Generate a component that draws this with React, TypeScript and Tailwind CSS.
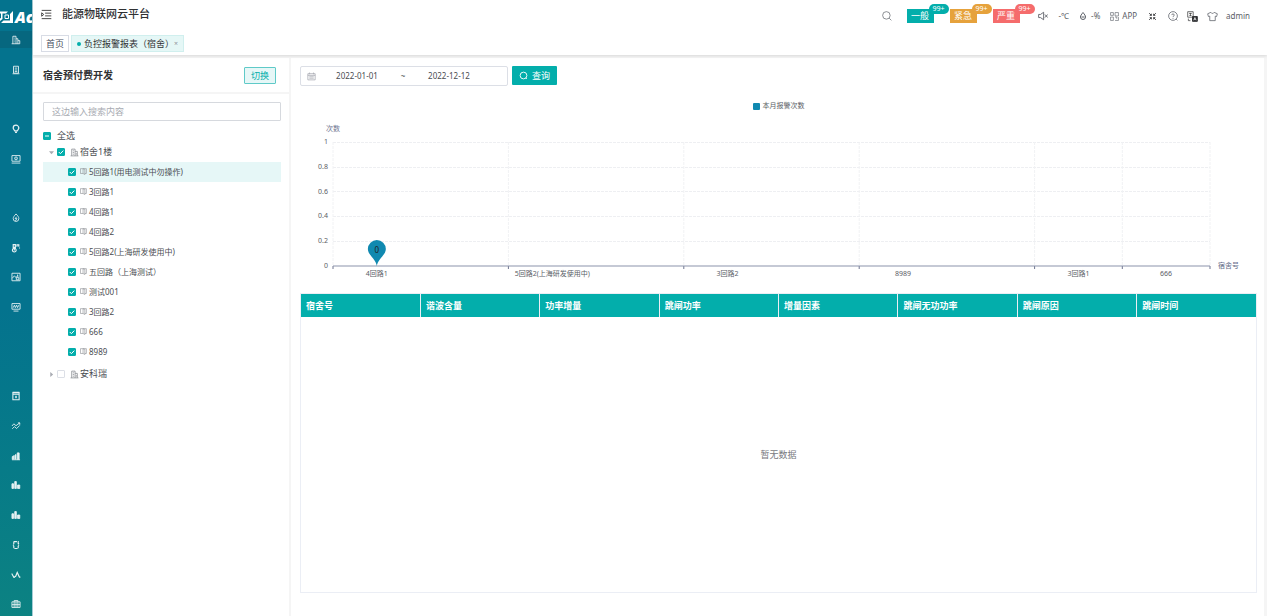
import { useState } from 'react';
import type { ReactNode } from 'react';

const sideIcons: Array<ReactNode | null> = [
  // buildings
  <path d="M3 14V2h5v12M8 6h3v8M11 9h3v5H1M5 5h1M5 8h1M5 11h1" />,
  // meter
  <path d="M4 2h8v11H4zM2.500 14h11M6 5h4M6 8h4M6 10.500h4" />,
  null,
  <path d="M6 11C5.500 9.500 3.500 8.500 3.500 6.500a4.500 4.500 0 0 1 9 0C12.500 8.500 10.500 9.500 10 11zM6.500 13.500h3" strokeWidth="2" />,
  <path d="M1.500 2.500h13v9h-13zM1 14.500h14M8 4.700a2.300 2.300 0 1 1 0 4.600A2.300 2.300 0 0 1 8 4.700zM8 6.500v1" />,
  null,
  <path d="M8 1.500c3 3 4.500 5 4.500 7.500a4.500 4.500 0 0 1-9 0C3.500 7 5 4.500 8 1.500zM9 6L6.500 9h3L7 12.500" />,
  <path d="M3.500 2.500v6.500a3 3 0 1 0 3.500 0v-6.500zM5.300 6v6M9.500 6V3h3v3M13 8h1.500" strokeWidth="1.800" />,
  <path d="M1.500 2h13v12h-13zM2 10l3.500-4 2.500 3 2-2.500h2M8.500 9h4v3.500h-4zM10.500 4v3" />,
  <path d="M1.500 2.500h13v9h-13zM4 14.500h8M3.500 9l2-4 1.500 4 2-4 1.500 4 2-4" />,
  null,
  null,
  <path d="M3 2.500h10v11.500H3zM2.500 2h11M3 5h10M8 7.500v4M6.500 9.500h3" strokeWidth="1.700" />,
  <path d="M1.500 8l3-3.500 3.500 3L14 3M2 12.500l3.500-3.500 3.500 3L14 7M11 3h3v3" />,
  <path fill="currentColor" d="M2 13.500V9l2-1.500v6M6 13.500V7l2-1.500v8M10 13.500V3h3v10.500zM1.500 14h13" />,
  <path fill="currentColor" d="M1.500 13.500V6h2.500v7.500zM6 13.500v-11h2.500v11zM10.500 13.500V8H14v5.500z" />,
  <path fill="currentColor" d="M1.500 13.500V6h2.500v7.500zM6 13.500v-11h2.500v11zM10.500 13.500V8H14v5.500z" />,
  <path d="M4.500 2.500h7v3l1.500 0M11.500 2.500v3.500l1.500 2-1.500 2v3.500h-7V10L3 8l1.500-2V2.500" strokeDasharray="5 1.500" strokeWidth="1.800" />,
  <path d="M1.500 6.500l3 5 3-1.500 2.500-6 3.500 7.500M1 6h1M4 12h2M9 4h1.500M13 11.500h2" strokeWidth="1.900" />,
  <path d="M1.500 4.500h13v9h-13zM5 4.500V2.500h6v2M1.500 9h13M5 4.500v9M8 4.500v9M11 4.500v9" />,
];

interface Leaf {
  id: number;
  name: string;
}

const leaves: Leaf[] = [
  { id: 1, name: '5回路1(用电测试中勿操作)' },
  { id: 2, name: '3回路1' },
  { id: 3, name: '4回路1' },
  { id: 4, name: '4回路2' },
  { id: 5, name: '5回路2(上海研发使用中)' },
  { id: 6, name: '五回路（上海测试）' },
  { id: 7, name: '测试001' },
  { id: 8, name: '3回路2' },
  { id: 9, name: '666' },
  { id: 10, name: '8989' },
];

const alarms = [
  { name: '一般', color: 'bg-[#03aeab]' },
  { name: '紧急', color: 'bg-[#e6a23c]' },
  { name: '严重', color: 'bg-[#f56c6c]' },
];

const columns = ['宿舍号', '谐波含量', '功率增量', '跳闸功率', '增量因素', '跳闸无功功率', '跳闸原因', '跳闸时间'];

const yTicks = ['1', '0.8', '0.6', '0.4', '0.2', '0'];

// start and end of every category band, out of 10
const bands = [
  { from: 0, to: 2, label: '4回路1' },
  { from: 2, to: 4, label: '5回路2(上海研发使用中)' },
  { from: 4, to: 6, label: '3回路2' },
  { from: 6, to: 8, label: '8989' },
  { from: 8, to: 9, label: '3回路1' },
  { from: 9, to: 10, label: '666' },
];

function Icon({ children, className = '' }: { children: ReactNode; className?: string }) {
  return (
    <svg
      viewBox="0 0 16 16"
      fill="none"
      stroke="currentColor"
      strokeWidth="1.4"
      aria-hidden="true"
      className={`shrink-0 ${className}`}
    >
      {children}
    </svg>
  );
}

function Tick({ label, checked, partial, onChange }: {
  label: string;
  checked: boolean;
  partial?: boolean;
  onChange: () => void;
}) {
  return (
    <span className="relative flex size-2 shrink-0">
      <input
        type="checkbox"
        aria-label={label}
        checked={checked}
        onChange={onChange}
        className="size-2 appearance-none rounded-[1px] border border-[#dcdfe6] bg-white checked:border-[#03aeab] checked:bg-[#03aeab]"
      />
      {checked && (
        <svg viewBox="0 0 8 8" fill="none" stroke="white" aria-hidden="true" className="pointer-events-none absolute inset-0">
          <path d={partial ? 'M2 4h4' : 'M1.8 4l1.600 1.700L6.300 2.600'} />
        </svg>
      )}
    </span>
  );
}

function Sidebar() {
  return (
    <nav className="flex w-[33px] shrink-0 flex-col overflow-hidden border-r border-[#a5ccd5] bg-linear-to-b from-[#04738e] from-50% to-[#0c8282] text-white">
      <a href="#home" className="flex h-[25px] shrink-0 items-end gap-[2px] overflow-hidden">
        <svg viewBox="0 0 13 14" aria-hidden="true" className="mb-px h-[14px] w-[13px] shrink-0">
          <path d="M13 1v12H1l2.500-2.500H10V4z" fill="white" />
          <path d="M0 1.500h8L6 3.500H2.500V9L0 11V8.500L1 8V3.500H0z" fill="white" />
          <path d="M5 5h3.500v3.500H5z" fill="none" stroke="white" />
        </svg>
        <span className="font-['Open_Sans',sans-serif] text-[16px] leading-4 font-extrabold italic">Ac</span>
      </a>
      <ul className="-mb-[3px] flex flex-1 flex-col">
        {sideIcons.map((icon, i) => (
          <li key={i} className="flex flex-1 items-center">
            {icon && (
              <a
                href={`#menu-${i}`}
                className={`flex h-[17px] w-full items-center justify-center ${i === 0 ? 'bg-[#06677f]' : ''}`}
              >
                <Icon className="size-[10px] opacity-90">{icon}</Icon>
              </a>
            )}
          </li>
        ))}
      </ul>
    </nav>
  );
}

function Header() {
  return (
    <header className="relative h-[55px] shrink-0 bg-white shadow-[0_1px_3px_rgba(0,0,0,0.12)]">
      <div className="flex h-8 justify-between pr-[17px] pl-2">
        <div className="flex h-7 items-center gap-[10px]">
          <button aria-label="折叠菜单" className="flex">
            <Icon className="size-[11px] text-[#444]">
              <path d="M1 2h14M6 6h9M6 10h9M1 14h14M1 5.500v5L4 8z" />
            </Icon>
          </button>
          <h1 className="text-[11px] font-medium text-[#303133]">能源物联网云平台</h1>
        </div>
        <div className="flex items-center text-[8px] text-[#5a5e66]">
          <button aria-label="搜索" className="mr-[15px] flex">
            <Icon className="size-[10px]"><path strokeWidth="1.100" d="M7 1a6 6 0 1 1 0 12A6 6 0 0 1 7 1zM11.500 11.500L15 15" /></Icon>
          </button>
          <div className="mr-[18px] flex gap-4">
            {alarms.map(alarm => (
              <button key={alarm.name} className={`relative h-[14px] w-[27px] text-[9px] leading-[14px] text-white ${alarm.color}`}>
                {alarm.name}
                <span className={`absolute -top-[5px] left-[22px] h-[10px] rounded-full px-1 text-[7px] leading-[10px] ${alarm.color}`}>
                  99+
                </span>
              </button>
            ))}
          </div>
          <button aria-label="静音" className="mr-[11px] flex">
            <Icon className="size-[10px]"><path d="M1 5.500h3L9 2v12L4 10.500H1zM11 5.500l4.500 5M15.500 5.500l-4.500 5" /></Icon>
          </button>
          <span className="mr-[10px]">-℃</span>
          <Icon className="mr-1 size-[8px]"><path strokeWidth="2" d="M8 1c3 4 5 6 5 9a5 5 0 0 1-10 0c0-3 2-5 5-9zM5 10h6" /></Icon>
          <span className="mr-[10px]">-%</span>
          <a href="#app" className="mr-[11px] flex items-center gap-[3px]">
            <Icon className="size-[9px]"><path strokeWidth="1.100" d="M1 1h5v5H1zM9 1h6v6H9zM1 9h5v6H1zM9 9h3v3M15 9v6H9" /></Icon>
            APP
          </a>
          <button aria-label="全屏" className="mr-[11px] flex">
            <Icon className="size-[9px] text-[#303133]">
              <path strokeWidth="1.500" d="M3 6h3V3M10 3v3h3M13 10h-3v3M6 13v-3H3M2 2l4 4M14 2l-4 4M14 14l-4-4M2 14l4-4" />
            </Icon>
          </button>
          <button aria-label="帮助" className="mr-[9px] flex">
            <Icon className="size-[10px]"><path strokeWidth="1.200" d="M8 1a7 7 0 1 1 0 14A7 7 0 0 1 8 1zM6 6.500C6 4 10 4 10 6.500 10 8 8 8 8 9.500M8 11v1.500M13 13l2 2" /></Icon>
          </button>
          <button aria-label="语言" className="mr-[9px] flex">
            <Icon className="size-[11px] text-[#303133]">
              <path strokeWidth="1" d="M1 1h8v8H1zM3 3.500h4M5 3v4M3.500 6.500h3M2 11v3h3" />
              <path fill="currentColor" d="M8 8h7v7H8z" />
              <path stroke="white" strokeWidth="1" d="M9.800 13.500l1.700-4 1.700 4M10.500 12h2" />
            </Icon>
          </button>
          <button aria-label="主题" className="mr-[8px] flex">
            <Icon className="size-[11px]"><path strokeWidth="1.100" d="M5.500 2L1 4l1 4 2-.5V14h8V7.500l2 .5 1-4-4.500-2c-1 2-4 2-5 0z" /></Icon>
          </button>
          <a href="#user">admin</a>
        </div>
      </div>
      <div className="mt-[3px] flex gap-[2px] pl-2 text-[9px] leading-[15px]">
        <a href="#home" className="border border-[#d8dce5] px-1 text-[#495060]">首页</a>
        <span className="flex items-center border border-[#d0efee] bg-[#e5f7f6] px-[5px] text-[#303133]">
          <span className="mr-[3px] size-1 rounded-full bg-[#03aeab]" />
          <a href="#report">负控报警报表（宿舍）</a>
          <button aria-label="关闭" className="text-[7px] text-[#909399]">×</button>
        </span>
      </div>
    </header>
  );
}

function BuildingIcon() {
  return (
    <Icon className="mr-px ml-[5px] size-[9px] text-[#8a8d93]">
      <path d="M3 14V2h6v12M9 6h4v8M1 14h14M5 5h2M5 8h2M5 11h2M11 9v3" />
    </Icon>
  );
}

function TreePanel() {
  const [checked, setChecked] = useState<number[]>(leaves.map(l => l.id));
  const [otherChecked, setOtherChecked] = useState(false);
  const [current, setCurrent] = useState(1);
  const [keyword, setKeyword] = useState('');

  const toggle = (id: number) => {
    setChecked(checked.includes(id) ? checked.filter(c => c !== id) : [...checked, id]);
  };
  const toggleAll = () => setChecked(checked.length ? [] : leaves.map(l => l.id));

  return (
    <aside className="w-[256px] shrink-0 bg-white text-[9px] text-[#4a4d52]">
      <div className="flex h-9 items-center justify-between border-b-2 border-[#f5f5f5] pr-[13px] pl-[10px]">
        <h2 className="text-[10px] font-bold text-[#303133]">宿舍预付费开发</h2>
        <button className="h-[17px] rounded-[1px] border border-[#5fcac8] bg-[#e6f7f7] px-[6px] leading-[15px] text-[#03aeab]">切换</button>
      </div>
      <div className="pt-2 pr-2 pl-[10px]">
        <input
          type="text"
          aria-label="搜索"
          placeholder="这边输入搜索内容"
          value={keyword}
          onChange={e => setKeyword(e.target.value)}
          className="block h-[19px] w-full rounded-[1px] border border-[#d6d9de] px-2 outline-none placeholder:text-[#a8abb2]"
        />
        <div className="mt-[7px] flex h-4 items-center gap-[6px]">
          <Tick label="全选" partial checked={checked.length > 0} onChange={toggleAll} />
          全选
        </div>
        <ul>
          <li>
            <div className="flex h-4 items-center pl-[6px]">
              <svg viewBox="0 0 6 6" aria-hidden="true" className="mr-[3px] size-[5px]"><path d="M0 1.500h6L3 5z" fill="#a8abb2" /></svg>
              <Tick label="宿舍1楼" checked={checked.length > 0} onChange={toggleAll} />
              <BuildingIcon />
              宿舍1楼
            </div>
            <ul className="py-[2px] text-[8px]">
              {leaves.filter(l => l.name.includes(keyword)).map(leaf => (
                <li
                  key={leaf.id}
                  onClick={() => setCurrent(leaf.id)}
                  className={`flex h-5 items-center pl-[25px] ${leaf.id === current ? 'bg-[#e6f7f7]' : ''}`}
                >
                  <Tick label={leaf.name} checked={checked.includes(leaf.id)} onChange={() => toggle(leaf.id)} />
                  <Icon className="mr-[2px] mb-[2px] ml-1 size-[7px] text-[#8a8d93]"><path d="M1 1.500h6v11H1zM7 1.500h7.500v11H11M7 1.500l4 1.500v12l-4-2.500" /></Icon>
                  {leaf.name}
                </li>
              ))}
            </ul>
          </li>
          <li className="flex h-5 items-center pl-[6px]">
            <svg viewBox="0 0 6 6" aria-hidden="true" className="mr-[3px] size-[5px]"><path d="M1.500 0v6L5 3z" fill="#a8abb2" /></svg>
            <Tick label="安科瑞" checked={otherChecked} onChange={() => setOtherChecked(!otherChecked)} />
            <BuildingIcon />
            安科瑞
          </li>
        </ul>
      </div>
    </aside>
  );
}

function AlarmChart() {
  return (
    <figure className="text-[7px] leading-[10px] text-[#5a5e66]">
      <figcaption className="flex items-center justify-center gap-[3px]">
        <span className="size-[7px] rounded-[1px] bg-[#1089b0]" />
        本月报警次数
      </figcaption>
      <div className="mt-[13px] pl-[26px] text-[#6e7590]">次数</div>
      <div className="mt-[3px] flex">
        <div className="flex h-[134px] w-[29px] flex-col justify-between pr-[1px] text-right">
          {yTicks.map(tick => <span key={tick}>{tick}</span>)}
        </div>
        <div className="flex-1 pt-[5px] pl-[4px]">
          <svg width="100%" height="127" role="img" aria-label="本月报警次数" className="block overflow-visible">
            {[0, 25, 49, 74, 99].map(y => (
              <line key={y} x1="0" x2="100%" y1={y + 0.5} y2={y + 0.5} stroke="#eeeff2" strokeDasharray="3 1" />
            ))}
            {[0, ...bands.map(b => b.to)].map(x => (
              <g key={x}>
                <line x1={`${x * 10}%`} x2={`${x * 10}%`} y1="0" y2="124" stroke="#f1f2f4" strokeDasharray="3 1" />
                <line x1={`${x * 10}%`} x2={`${x * 10}%`} y1="124" y2="127" stroke="#6e7590" />
              </g>
            ))}
            <line x1="0" x2="100%" y1="124" y2="124" stroke="#8b93ab" />
            {/* marker of the largest value */}
            <svg x="5%" y="124" className="overflow-visible">
              <path d="M0 0C-1-7-9-11-9-17a9 9 0 0 1 18 0C9-11 1-7 0 0z" fill="#1089b0" />
              <text y="-13" textAnchor="middle" fontSize="8" fill="#222">0</text>
            </svg>
          </svg>
          <div className="flex">
            {bands.map(band => (
              <span
                key={band.from}
                className={band.to - band.from === 2 ? 'flex w-1/5' : 'flex w-1/10'}
              >
                <span className={`text-center whitespace-nowrap ${band.to - band.from === 2 ? 'w-1/2' : 'w-full'}`}>
                  {band.label}
                </span>
              </span>
            ))}
          </div>
        </div>
        <span className="w-[47px] self-end pb-2 pl-2 font-medium text-[#6e7590]">宿舍号</span>
      </div>
    </figure>
  );
}

function AlarmTable() {
  return (
    <div className="flex flex-1 flex-col border border-[#ebeef5]">
      <table className="w-full table-fixed">
        <thead>
          <tr className="bg-[#03aeab]">
            {columns.map(column => (
              <th key={column} className="h-[23px] border-r border-[#ebeef5] px-[5px] text-left text-[9px] font-bold text-white last:border-r-0">
                {column}
              </th>
            ))}
          </tr>
        </thead>
      </table>
      <p className="flex flex-1 items-center justify-center text-[9px] text-[#77797e]">暂无数据</p>
    </div>
  );
}

export default function App() {
  const [start, setStart] = useState('2022-01-01');
  const [end, setEnd] = useState('2022-12-12');

  return (
    <div className="flex h-screen overflow-hidden bg-[#f5f5f5] font-['Noto_Sans','Noto_Sans_CJK_SC',sans-serif]">
      <Sidebar />
      <div className="flex min-w-0 flex-1 flex-col">
        <Header />
        <div className="flex min-h-0 flex-1 gap-[2px] pt-[3px] pr-[3px]">
          <TreePanel />
          <main className="flex min-w-0 flex-1 flex-col bg-white pt-2 pr-[7px] pb-[23px] pl-[9px]">
            <form className="flex gap-1" onSubmit={e => e.preventDefault()}>
              <div className="flex h-5 w-[208px] items-center rounded-[2px] border border-[#dcdfe6] text-[8px] text-[#4a4d52]">
                <Icon className="ml-[6px] size-[9px] text-[#a8abb2]"><path d="M1.500 3h13v11h-13zM1.500 6h13M4.500 1v3M11.500 1v3M4 8.500h8M4 11h8" /></Icon>
                <input
                  aria-label="开始日期"
                  value={start}
                  onChange={e => setStart(e.target.value)}
                  className="ml-[2px] w-[78px] text-center outline-none"
                />
                <span className="w-[14px] text-center">~</span>
                <input
                  aria-label="结束日期"
                  value={end}
                  onChange={e => setEnd(e.target.value)}
                  className="w-[78px] text-center outline-none"
                />
              </div>
              <button type="submit" className="flex h-[19px] items-center gap-1 rounded-[1px] bg-[#03aeab] px-[7px] text-[9px] text-white">
                <Icon className="size-[9px]"><path strokeWidth="1.600" d="M8 2a6 6 0 1 1 0 12A6 6 0 0 1 8 2zM12 12l2 2" /></Icon>
                查询
              </button>
            </form>
            <div className="mt-[15px] mb-[14px]">
              <AlarmChart />
            </div>
            <AlarmTable />
          </main>
        </div>
      </div>
    </div>
  );
}
